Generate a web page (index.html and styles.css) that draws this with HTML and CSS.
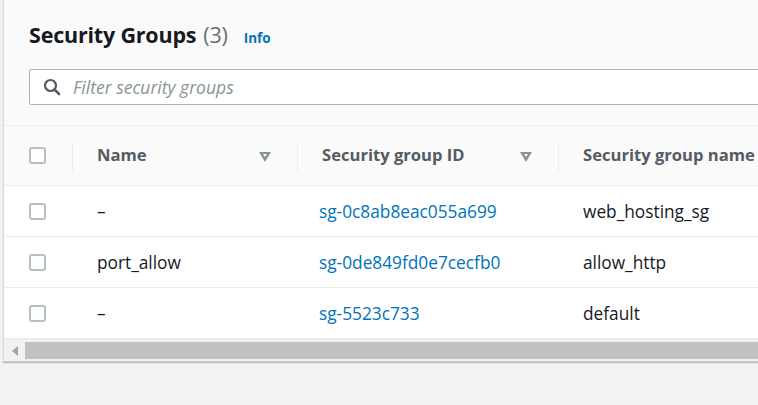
FILE: index.html
```html
<!DOCTYPE html>
<html>
<head>
<meta charset="utf-8">
<link rel="stylesheet" href="styles.css">
</head>
<body>
<div class="page">
  <section class="card">
    <header class="card-head">
      <h2 class="title"><span>Security Groups</span><span class="count">(3)</span><a class="info">Info</a></h2>
      <div class="search">
        <svg class="search-icon" width="18" height="18" viewBox="0 0 18 18">
          <circle cx="7.5" cy="7.5" r="5.5" fill="none" stroke="#545b64" stroke-width="2.2"/>
          <line x1="11.5" y1="11.5" x2="16" y2="16" stroke="#545b64" stroke-width="2.6" stroke-linecap="round"/>
        </svg>
        <span class="placeholder">Filter security groups</span>
      </div>
    </header>
    <div class="table-wrap">
      <table class="table">
        <thead>
          <tr>
            <th class="col-check"><span class="checkbox"></span></th>
            <th class="col-name"><div class="th-inner"><span>Name</span><span class="sort"></span></div></th>
            <th class="col-id"><div class="th-inner"><span>Security group ID</span><span class="sort"></span></div></th>
            <th class="col-gname"><div class="th-inner"><span>Security group name</span></div></th>
          </tr>
        </thead>
        <tbody>
          <tr>
            <td class="col-check"><span class="checkbox"></span></td>
            <td class="dash">–</td>
            <td><a class="link">sg-0c8ab8eac055a699</a></td>
            <td>web_hosting_sg</td>
          </tr>
          <tr>
            <td class="col-check"><span class="checkbox"></span></td>
            <td>port_allow</td>
            <td><a class="link">sg-0de849fd0e7cecfb0</a></td>
            <td>allow_http</td>
          </tr>
          <tr>
            <td class="col-check"><span class="checkbox"></span></td>
            <td class="dash">–</td>
            <td><a class="link">sg-5523c733</a></td>
            <td>default</td>
          </tr>
        </tbody>
      </table>
    </div>
    <div class="hscroll">
      <span class="arrow"></span>
      <span class="thumb"></span>
    </div>
  </section>
</div>
</body>
</html>
```

FILE: styles.css
```css
html, body {
  margin: 0;
  padding: 0;
  background: #f2f2f2;
  overflow: hidden;
  width: 758px;
  height: 405px;
}

.page {
  padding-left: 3px;
  font-family: "Open Sans", "Noto Sans", sans-serif;
  color: #16191f;
}

.card {
  width: 1000px;
  background: #fafafa;
  border-left: 1px solid #d5dbdb;
  border-bottom: 1px solid #c6cccc;
  box-shadow: 0 1px 1px rgba(0,28,36,0.25);
}

.card-head {
  padding: 21px 0 20px 25px;
}

.title {
  margin: 0;
  height: 29px;
  display: flex;
  align-items: baseline;
  font-size: 21.5px;
  line-height: 28px;
  font-weight: 700;
  color: #16191f;
  letter-spacing: -0.2px;
}

.count {
  margin-left: 7px;
  font-weight: 400;
  color: #687078;
}

.info {
  margin-left: 16px;
  font-size: 13.5px;
  font-weight: 700;
  color: #0073bb;
  letter-spacing: 0;
}

.search {
  margin-top: 19px;
  height: 34px;
  border: 1px solid #aab7b8;
  border-radius: 2px;
  background: #fff;
  display: flex;
  align-items: center;
  padding-left: 13px;
}

.search-icon {
  flex: none;
}

.placeholder {
  margin-left: 12px;
  font-size: 17.5px;
  font-style: italic;
  color: #879596;
}

.table-wrap {
  overflow: hidden;
}

.table {
  border-collapse: collapse;
  border-spacing: 0;
  width: 1000px;
  table-layout: fixed;
}

.table th, .table td {
  padding: 0 0 0 25px;
  text-align: left;
  font-size: 17.3px;
  white-space: nowrap;
}

.table thead th {
  height: 59px;
  background: #fafafa;
  border-top: 1px solid #eaeded;
  border-bottom: 1px solid #eaeded;
  font-weight: 700;
  font-size: 16.6px;
  color: #545b64;
  position: relative;
}

.table thead th .th-inner span:first-child {
  position: relative;
  top: -1px;
}

.table tbody td {
  height: 50px;
  background: #fff;
  border-bottom: 1px solid #eaeded;
  color: #16191f;
}

.col-check { width: 43px; }
.col-name { width: 200px; }
.col-id { width: 236px; }

.table th.col-name::before,
.table th.col-id::before,
.table th.col-gname::before {
  content: "";
  position: absolute;
  left: 0;
  top: 18px;
  height: 27px;
  border-left: 1px solid #eaeded;
}

.th-inner {
  display: flex;
  align-items: center;
  justify-content: space-between;
  padding-right: 26px;
}

.sort {
  width: 0;
  height: 0;
  border-left: 6px solid transparent;
  border-right: 6px solid transparent;
  border-top: 10px solid #879596;
  position: relative;
  margin-top: 2px;
}

.sort::after {
  content: "";
  position: absolute;
  left: -2px;
  top: -7.5px;
  width: 0;
  height: 0;
  border-left: 2px solid transparent;
  border-right: 2px solid transparent;
  border-top: 3px solid #fafafa;
}

.checkbox {
  display: block;
  width: 13px;
  height: 13px;
  border: 2px solid #b5c0c1;
  border-radius: 3px;
  background: #fff;
}

.dash {
  color: #545b64;
}

.link {
  color: #0073bb;
  margin-left: -3px;
}

.hscroll {
  height: 21px;
  background: #f1f1f1;
  display: flex;
  align-items: center;
  border-top: 1px solid #eaeded;
}

.arrow {
  width: 0;
  height: 0;
  margin-left: 8px;
  border-top: 5px solid transparent;
  border-bottom: 5px solid transparent;
  border-right: 6px solid #a3a3a3;
}

.thumb {
  margin-left: 7px;
  height: 17px;
  flex: 1;
  background: #c1c1c1;
}
```
